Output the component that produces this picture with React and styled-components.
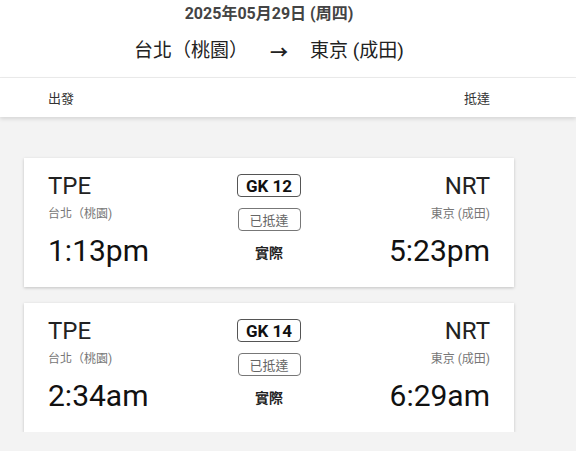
import React from "react";
import styled, { createGlobalStyle } from "styled-components";

const flights = [
  {
    no: "GK 12",
    from: "TPE",
    fromCity: "台北（桃園)",
    to: "NRT",
    toCity: "東京 (成田)",
    dep: "1:13pm",
    arr: "5:23pm",
  },
  {
    no: "GK 14",
    from: "TPE",
    fromCity: "台北（桃園)",
    to: "NRT",
    toCity: "東京 (成田)",
    dep: "2:34am",
    arr: "6:29am",
  },
];

function App() {
  return (
    <>
      <GlobalStyle />
      <Header>
        <HeaderInner>
          <DateLine>2025年05月29日 (周四)</DateLine>
          <Route>
            <span>台北（桃園）</span>
            <Arrow>→</Arrow>
            <span>東京 (成田)</span>
          </Route>
        </HeaderInner>
      </Header>
      <SubHeader>
        <SubHeaderInner>
          <SubLabel>出發</SubLabel>
          <SubLabel>抵達</SubLabel>
        </SubHeaderInner>
      </SubHeader>
      <List>
        {flights.map((f) => (
          <Card key={f.no}>
            <Column align="flex-start">
              <Code>{f.from}</Code>
              <City>{f.fromCity}</City>
              <Time>{f.dep}</Time>
            </Column>
            <Column align="center">
              <FlightNo>{f.no}</FlightNo>
              <Status>已抵達</Status>
              <Actual>實際</Actual>
            </Column>
            <Column align="flex-end">
              <Code>{f.to}</Code>
              <City>{f.toCity}</City>
              <Time>{f.arr}</Time>
            </Column>
          </Card>
        ))}
      </List>
    </>
  );
}

const GlobalStyle = createGlobalStyle`
  body {
    margin: 0;
    background-color: #f3f3f3;
    font-family: Roboto, "Noto Sans CJK TC", sans-serif;
    color: #222;
  }
`;

const Header = styled.div`
  background-color: #fff;
  border-bottom: 1px solid #ececec;
`;

const HeaderInner = styled.div`
  width: 538px;
  height: 77px;
  display: flex;
  flex-direction: column;
  align-items: center;
`;

const DateLine = styled.div`
  margin-top: 4px;
  height: 20px;
  line-height: 20px;
  font-size: 16px;
  font-weight: 700;
  color: #444;
`;

const Route = styled.div`
  margin-top: 15px;
  display: flex;
  align-items: center;
  gap: 22px;
  font-size: 19px;
  line-height: 24px;
  color: #222;
`;

const Arrow = styled.span`
  font-family: "Noto Sans CJK TC", sans-serif;
  font-size: 18px;
  font-weight: 700;
`;

const SubHeader = styled.div`
  background-color: #fff;
  box-shadow: 0 2px 4px rgba(0, 0, 0, 0.12);
`;

const SubHeaderInner = styled.div`
  width: 538px;
  height: 39px;
  box-sizing: border-box;
  padding: 0 48px;
  display: flex;
  align-items: center;
  justify-content: space-between;
`;

const SubLabel = styled.span`
  font-size: 13px;
  color: #333;
`;

const List = styled.div`
  width: 490px;
  margin: 41px 0 0 24px;
  display: flex;
  flex-direction: column;
  gap: 16px;
`;

const Card = styled.div`
  background-color: #fff;
  box-sizing: border-box;
  height: 129px;
  padding: 16px 24px 0;
  display: flex;
  justify-content: space-between;
  box-shadow: 0 1px 3px rgba(0, 0, 0, 0.2);
`;

const Column = styled.div`
  display: flex;
  flex-direction: column;
  align-items: ${(p) => p.align};
`;

const Code = styled.div`
  font-size: 24px;
  line-height: 24px;
  color: #222;
`;

const City = styled.div`
  margin-top: 8px;
  font-size: 12px;
  line-height: 16px;
  color: #777;
`;

const Time = styled.div`
  margin-top: 14px;
  font-size: 30px;
  line-height: 30px;
  color: #111;
`;

const FlightNo = styled.div`
  box-sizing: border-box;
  width: 64px;
  height: 23px;
  border: 1px solid #555;
  border-radius: 4px;
  display: flex;
  align-items: center;
  justify-content: center;
  font-size: 17px;
  font-weight: 700;
  color: #111;
`;

const Status = styled.div`
  box-sizing: border-box;
  margin-top: 11px;
  width: 63px;
  height: 23px;
  border: 1px solid #777;
  border-radius: 4px;
  display: flex;
  align-items: center;
  justify-content: center;
  font-size: 13px;
  color: #666;
`;

const Actual = styled.div`
  margin-top: 12px;
  font-size: 14px;
  line-height: 20px;
  font-weight: 700;
  color: #222;
`;

export default App;
